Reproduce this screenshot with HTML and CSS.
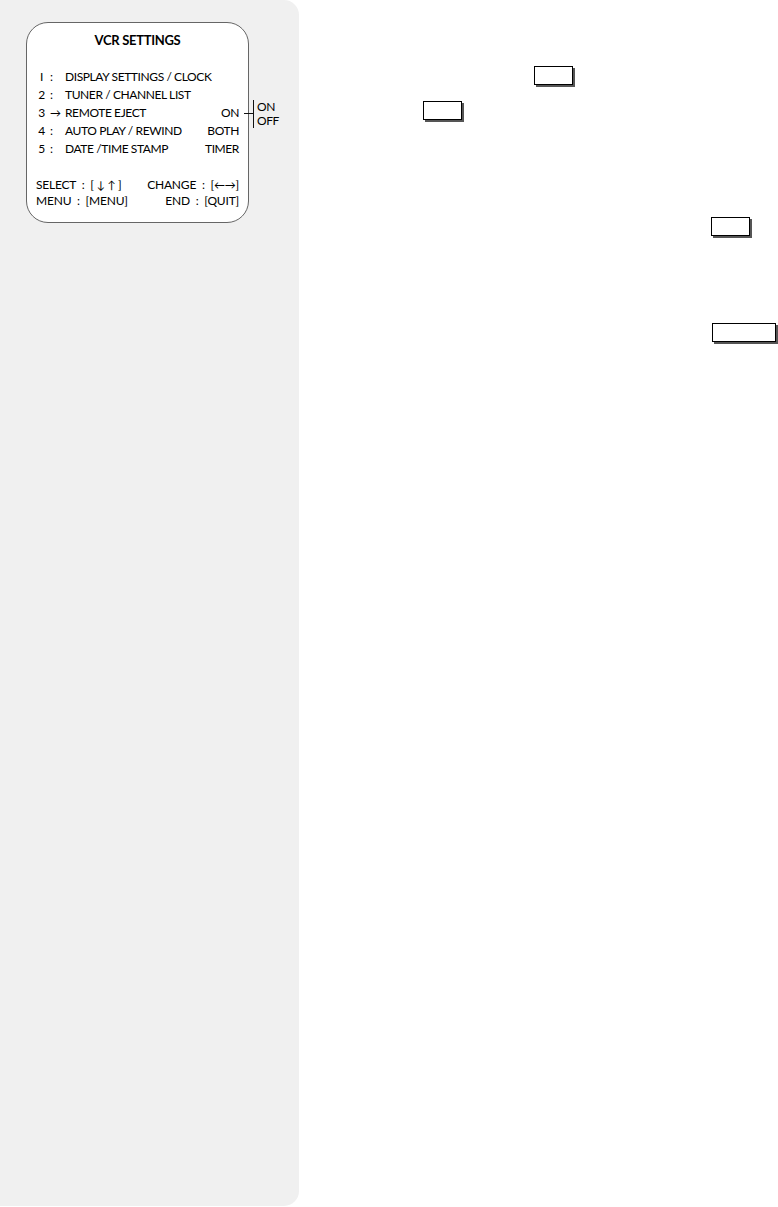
FILE: index.html
```html
<!DOCTYPE html>
<html lang="en">
<head>
    <meta charset="UTF-8">
    <meta name="viewport" content="width=device-width, initial-scale=1.0">
    <title>VCR Settings</title>
    <link rel="stylesheet" href="styles.css">
</head>
<body>
    <div class="page">
        <div class="sidebar">
            <div class="screen">
                <div class="screen-title">VCR SETTINGS</div>
                <div class="menu">
                    <div class="menu-row">
                        <span class="num">I</span><span class="sep">:</span>
                        <span class="label">DISPLAY SETTINGS / CLOCK</span><span class="value"></span>
                    </div>
                    <div class="menu-row">
                        <span class="num">2</span><span class="sep">:</span>
                        <span class="label">TUNER / CHANNEL LIST</span><span class="value"></span>
                    </div>
                    <div class="menu-row">
                        <span class="num">3</span><span class="sep arrow">&rarr;</span>
                        <span class="label">REMOTE EJECT</span>
                        <span class="value">ON<span class="options">
                                <span class="options-list">
                                    <span>ON</span>
                                    <span>OFF</span>
                                </span>
                            </span></span>
                    </div>
                    <div class="menu-row">
                        <span class="num">4</span><span class="sep">:</span>
                        <span class="label">AUTO PLAY / REWIND</span><span class="value">BOTH</span>
                    </div>
                    <div class="menu-row">
                        <span class="num">5</span><span class="sep">:</span>
                        <span class="label">DATE /TIME STAMP</span><span class="value">TIMER</span>
                    </div>
                </div>
                <div class="keys">
                    <div class="keys-row">
                        <span>SELECT&nbsp; : &nbsp;[ <span class="arr">&darr; &uarr;</span> ]</span>
                        <span>CHANGE&nbsp; : &nbsp;[<span class="arr">&larr;&rarr;</span>]</span>
                    </div>
                    <div class="keys-row">
                        <span>MENU&nbsp; : &nbsp;[MENU]</span>
                        <span>END&nbsp; : &nbsp;[QUIT]</span>
                    </div>
                </div>
            </div>
        </div>

        <div class="content">
            <div class="line line-1"><span class="key"></span></div>
            <div class="line line-2"><span class="key"></span></div>
            <div class="line line-3"><span class="key"></span></div>
            <div class="line line-4"><span class="key key-wide"></span></div>
        </div>
    </div>
</body>
</html>
```

FILE: styles.css
```css
body {
    margin: 0;
    font-family: Lato, "Open Sans", sans-serif;
    color: #000;
    background: #fff;
}
.page {
    display: flex;
    width: 778px;
    height: 1207px;
}
.sidebar {
    width: 299px;
    height: 1206px;
    flex-shrink: 0;
    background-color: #f0f0f0;
    border-radius: 0 15px 15px 0;
    padding: 22px 0 0 26px;
    box-sizing: border-box;
}
.screen {
    width: 223px;
    height: 201px;
    box-sizing: border-box;
    background: #fff;
    border: 1px solid #666;
    border-radius: 22px;
    padding: 8px 9px 0 9px;
    font-size: 12px;
    letter-spacing: -0.4px;
}
.screen-title {
    text-align: center;
    font-weight: bold;
    font-size: 13px;
    letter-spacing: -0.3px;
    line-height: 18px;
    margin-bottom: 19px;
}
.menu-row {
    display: flex;
    line-height: 18px;
}
.num {
    width: 11px;
    text-align: center;
}
.sep {
    width: 18px;
    padding-left: 3px;
    box-sizing: border-box;
}
.arrow {
    font-size: 11px;
}
.label {
    flex: 1;
}
.value {
    position: relative;
    text-align: right;
}
.options {
    position: absolute;
    left: 100%;
    top: -4px;
    margin-left: 14px;
    padding-left: 3px;
    border-left: 1px solid #111;
    height: 28px;
}
.options::before {
    content: "";
    position: absolute;
    left: -10px;
    top: 13px;
    width: 9px;
    border-top: 1px solid #111;
}
.options-list {
    display: flex;
    flex-direction: column;
    line-height: 14px;
    text-align: left;
}
.keys {
    margin-top: 19px;
    letter-spacing: -0.2px;
}
.keys-row {
    display: flex;
    justify-content: space-between;
    line-height: 16px;
}
.arr {
    font-size: 11px;
}
.content {
    flex: 1;
    padding-top: 66px;
}
.line {
    height: 20px;
}
.line-1 {
    padding-left: 235px;
}
.line-2 {
    margin-top: 15px;
    padding-left: 124px;
}
.line-3 {
    margin-top: 96px;
    padding-left: 412px;
}
.line-4 {
    margin-top: 86px;
    padding-left: 413px;
}
.key {
    display: inline-block;
    width: 39px;
    height: 19px;
    box-sizing: border-box;
    border: 1px solid #000;
    box-shadow: 2px 2px 0 #555;
    background: #fff;
}
.key-wide {
    width: 64px;
}
```
